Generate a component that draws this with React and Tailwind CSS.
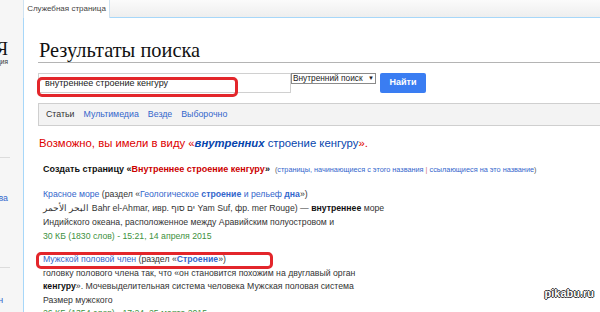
export default function App() {
  const link = "text-[#3366cc]";
  return (
    <div className="relative w-[600px] h-[312px] overflow-hidden bg-white flex text-[#222] font-['Liberation_Sans',Arial,sans-serif]">
      {/* left sidebar */}
      <aside className="w-[23px] shrink-0 bg-[#f6f6f6] flex flex-col">
        <div className="h-[18px]" />
        <div className="mt-[22px] flex justify-end overflow-hidden pr-[15px]">
          <span className="whitespace-nowrap font-['Liberation_Serif',serif] text-[18px] leading-[18px] text-[#111]">ВикипедиЯ</span>
        </div>
        <div className="mt-[0px] flex justify-end overflow-hidden pr-[15px]">
          <span className="whitespace-nowrap text-[6.5px] leading-[8px] text-[#333]">Свободная энциклопедия</span>
        </div>
        <div className="mt-[91px] h-px w-[10px] bg-[#dcdcdc]" />
        <div className="mt-[34px] flex justify-end overflow-hidden pr-[15px]">
          <span className="whitespace-nowrap text-[8.8px] leading-[12px] text-[#3366cc]">Ключевые слова</span>
        </div>
        <div className="mt-[63px] h-px w-[10px] bg-[#dcdcdc]" />
        <div className="mt-[26px] flex justify-end overflow-hidden pr-[20px]">
          <span className="whitespace-nowrap text-[8.8px] leading-[12px] text-[#3366cc]">Взаимный обмен</span>
        </div>
      </aside>

      {/* main */}
      <div className="flex-1 min-w-0 flex flex-col">
        <div className="h-[18px] flex bg-gradient-to-b from-[#fbfbfb] to-[#eeeeee] border-b border-[#a7d7f9]">
          <div className="w-[87px] h-[18px] -mb-px bg-white border-x border-[#cfe3f2] flex items-center justify-center text-[8px] text-[#444]">
            Служебная страница
          </div>
        </div>
        <div className="flex-1 border-l border-[#a7d7f9] pl-[14px]">
          <h1 className="mt-[20px] font-['Liberation_Serif',serif] text-[20.4px] leading-[24px] text-[#111] border-b border-[#b4b4b4] pl-px">
            Результаты поиска
          </h1>

          <div className="mt-[10px] flex items-start">
            <div className="w-[253px] h-[20px] border border-[#d0d0d0] pl-[6px] pt-[2px] flex items-center text-[9px] text-[#222]">
              внутреннее строение кенгуру
            </div>
            <div className="w-[85px] h-[11px] border border-[#8a8a8a] px-[1px] flex items-center justify-between text-[8.3px] leading-[9px] text-[#222]">
              <span>Внутренний поиск</span>
              <span className="text-[6px]">▼</span>
            </div>
            <div className="ml-[4px] w-[46px] h-[20px] rounded-[2px] bg-[#3a7df2] flex items-center justify-center text-white font-bold text-[9px]">
              Найти
            </div>
          </div>

          <div className="mt-[10px] h-[23px] border border-r-0 border-[#cfcfcf] bg-[#f3f3f3] pl-[7px] flex items-center gap-[9px] text-[8.8px]">
            <span className="text-[#333]">Статьи</span>
            <span className={link}>Мультимедиа</span>
            <span className={link}>Везде</span>
            <span className={link}>Выборочно</span>
          </div>

          <div className="mt-[10px] pl-px text-[11.3px] leading-[14px] text-[#dd0000] whitespace-nowrap">
            Возможно, вы имели в виду «<b className="italic text-[#0645ad]">внутренних</b>
            <span className="text-[#0645ad]"> строение кенгуру</span>».
          </div>

          <div className="mt-[10px] pl-[5px] leading-[14px] whitespace-nowrap">
            <span className="font-bold text-[9px] text-[#111]">
              Создать страницу «<span className="text-[#cc0000]">Внутреннее строение кенгуру</span>»
            </span>
            <span className="ml-[5px] text-[7.3px] text-[#555]">
              (<span className={link}>страницы, начинающиеся с этого названия</span>
              <span className="text-[#cc7777]"> | </span>
              <span className={link}>ссылающиеся на это название</span>)
            </span>
          </div>

          <div className="mt-[10px] pl-[5px] text-[8.7px] leading-[14px] text-[#333] whitespace-nowrap">
            <div>
              <span className={link}>Красное море</span> (раздел «
              <span className={link}>
                Геологическое <b>строение</b> и рельеф <b>дна</b>
              </span>
              »)
            </div>
            <div>
              <span dir="rtl">البحر الأحمر</span> Bahr el-Ahmar, ивр. <span dir="rtl">ים סוף</span> Yam Suf, фр. mer Rouge) — <b className="text-[#111]">внутреннее</b> море
            </div>
            <div>Индийского океана, расположенное между Аравийским полуостровом и</div>
            <div className="text-[#3d9140]">30 КБ (1830 слов) - 15:21, 14 апреля 2015</div>
          </div>

          <div className="mt-[10px] pl-[5px] text-[8.7px] leading-[13.5px] text-[#333] whitespace-nowrap">
            <div>
              <span className={link}>Мужской половой член</span> (раздел «<b className={link}>Строение</b>»)
            </div>
            <div>головку полового члена так, что «он становится похожим на двуглавый орган</div>
            <div>
              <b className="text-[#111]">кенгуру</b>». Мочевыделительная система человека Мужская половая система
            </div>
            <div>Размер мужского</div>
            <div className="text-[#3d9140]">26 КБ (1354 слов) - 17:24, 25 марта 2015</div>
          </div>
        </div>
      </div>

      {/* red annotation frames */}
      <div className="absolute left-[37px] top-[77px] w-[201px] h-[20px] border-[3px] border-[#e3262b] rounded-[5px]" />
      <div className="absolute left-[36px] top-[252px] w-[237px] h-[17px] border-[3px] border-[#e3262b] rounded-[5px]" />

      {/* watermark */}
      <div className="absolute right-[6px] bottom-[11px] text-[11px] font-bold text-white [text-shadow:1px_0_0_#333,-1px_0_0_#333,0_1px_0_#333,0_-1px_0_#333]">
        pikabu.ru
      </div>
    </div>
  );
}
